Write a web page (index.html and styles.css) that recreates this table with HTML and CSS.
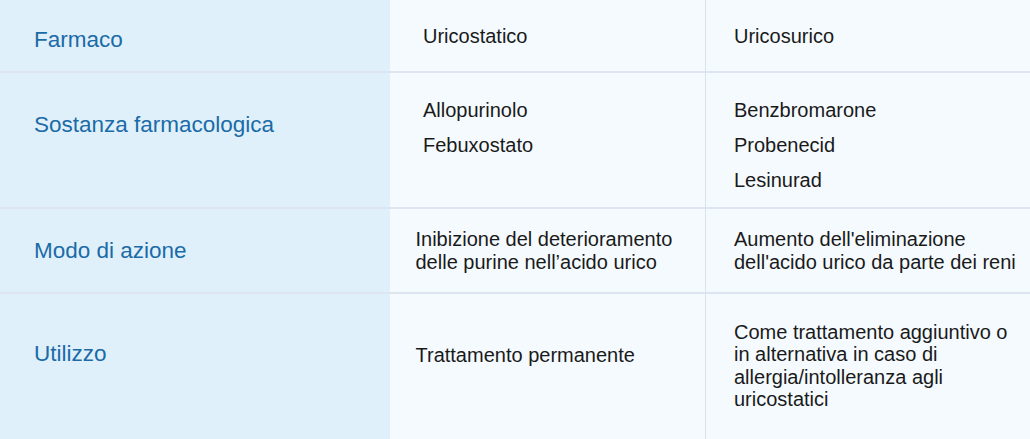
FILE: index.html
```html
<!DOCTYPE html>
<html lang="it">
<head>
<meta charset="utf-8">
<title>Uricostatici e uricosurici</title>
<link rel="stylesheet" href="styles.css">
</head>
<body>
<div class="table">
  <div class="row row-1">
    <div class="head">Farmaco</div>
    <div class="cell cell-wide">Uricostatico</div>
    <div class="cell cell-last">Uricosurico</div>
  </div>
  <div class="row row-2">
    <div class="head">Sostanza farmacologica</div>
    <div class="cell cell-wide">
      <p class="item">Allopurinolo</p>
      <p class="item">Febuxostato</p>
    </div>
    <div class="cell cell-last">
      <p class="item">Benzbromarone</p>
      <p class="item">Probenecid</p>
      <p class="item">Lesinurad</p>
    </div>
  </div>
  <div class="row row-3">
    <div class="head">Modo di azione</div>
    <div class="cell">Inibizione del deterioramento<br>delle purine nell’acido urico</div>
    <div class="cell cell-last">Aumento dell'eliminazione<br>dell'acido urico da parte dei reni</div>
  </div>
  <div class="row row-4">
    <div class="head">Utilizzo</div>
    <div class="cell">Trattamento permanente</div>
    <div class="cell cell-last">Come trattamento aggiuntivo o<br>in alternativa in caso di<br>allergia/intolleranza agli<br>uricostatici</div>
  </div>
</div>
</body>
</html>
```

FILE: styles.css
```css
html, body {
  margin: 0;
  padding: 0;
  background: #f5faff;
}

body {
  font-family: "Liberation Sans", Arial, Helvetica, sans-serif;
  width: 1030px;
  height: 439px;
  overflow: hidden;
}

.table {
  display: flex;
  flex-direction: column;
  height: 439px;
}

.row {
  display: grid;
  grid-template-columns: 390px 316px 1fr;
  align-items: stretch;
  border-bottom: 2px solid #dde5f1;
}

.row-1 { height: 71px; }
.row-2 { height: 134px; }
.row-3 { height: 83px; }
.row-4 { flex: 1; border-bottom: none; }

.head {
  background: #e0f0fa;
  color: #1a6ba7;
  font-size: 22.5px;
  line-height: 28px;
  padding-left: 34px;
}

.cell {
  color: #1a1a1a;
  font-size: 20px;
  line-height: 22.5px;
  padding-left: 25.5px;
  border-right: 1.5px solid #d9e3f0;
}

.cell-last {
  border-right: none;
  padding-left: 28px;
}

.cell-wide {
  padding-left: 33px;
}

.item {
  margin: 0 0 12.7px 0;
}

/* vertical placement per row */
.row-1 .head { padding-top: 25.5px; }
.row-1 .cell { padding-top: 25px; }

.row-2 .head { padding-top: 38px; }
.row-2 .cell { padding-top: 26px; }

.row-3 .head { padding-top: 28px; }
.row-3 .cell { padding-top: 19px; }

.row-4 .head { padding-top: 46px; }
.row-4 .cell { padding-top: 50px; }
.row-4 .cell-last { padding-top: 26.5px; }
```
